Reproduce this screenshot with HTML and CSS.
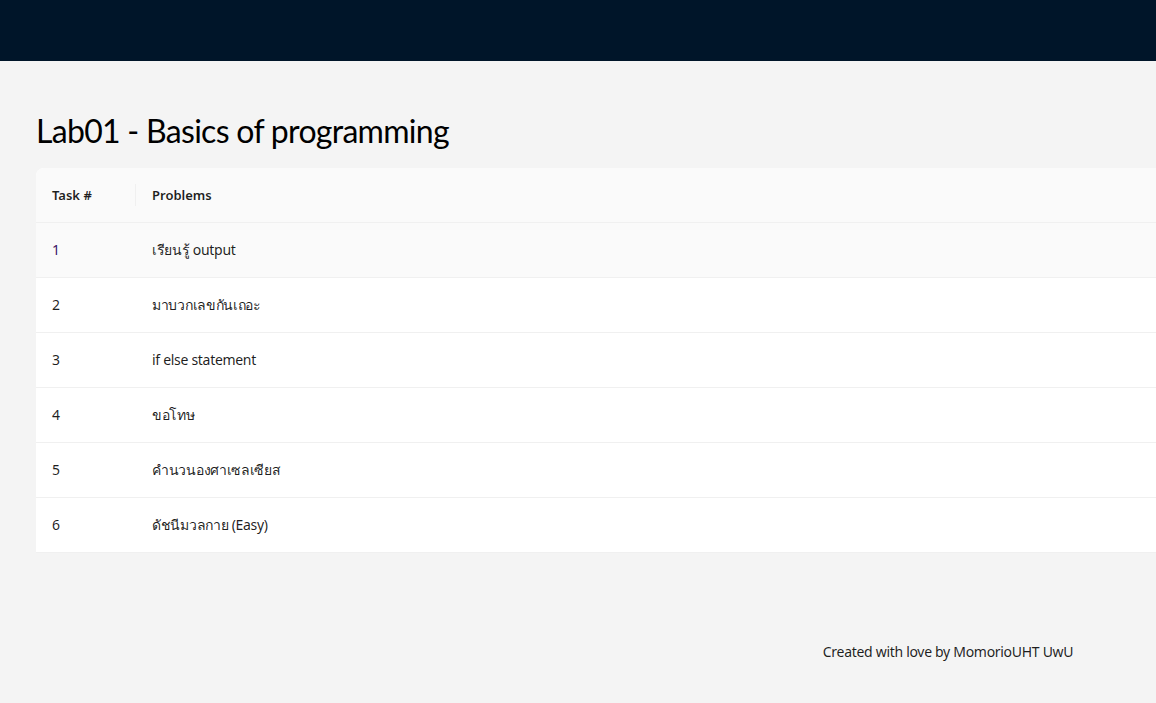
FILE: index.html
```html
<!DOCTYPE html>
<html lang="th">
<head>
<meta charset="utf-8">
<title>Lab01 - Basics of programming</title>
<link rel="stylesheet" href="styles.css">
</head>
<body>
<div class="layout">
  <header class="topbar"></header>
  <main class="content">
    <h2 class="page-title">Lab01 - Basics of programming</h2>
    <div class="table">
      <div class="row head">
        <div class="cell num">Task #</div>
        <div class="cell">Problems</div>
      </div>
      <div class="row hover">
        <div class="cell num link">1</div>
        <div class="cell">เรียนรู้ output</div>
      </div>
      <div class="row">
        <div class="cell num">2</div>
        <div class="cell">มาบวกเลขกันเถอะ</div>
      </div>
      <div class="row">
        <div class="cell num">3</div>
        <div class="cell">if else statement</div>
      </div>
      <div class="row">
        <div class="cell num">4</div>
        <div class="cell">ขอโทษ</div>
      </div>
      <div class="row">
        <div class="cell num">5</div>
        <div class="cell">คำนวนองศาเซลเซียส</div>
      </div>
      <div class="row">
        <div class="cell num">6</div>
        <div class="cell">ดัชนีมวลกาย (Easy)</div>
      </div>
    </div>
  </main>
  <footer class="footer">Created with love by MomorioUHT UwU</footer>
</div>
</body>
</html>
```

FILE: styles.css
```css
html, body {
  margin: 0;
  padding: 0;
  overflow: hidden;
  background: #f4f4f4;
}
body {
  font-family: "Noto Sans", "Open Sans", sans-serif;
  font-size: 14px;
  letter-spacing: -0.3px;
  color: rgba(0, 0, 0, 0.88);
}
.layout {
  width: 1896px;
  min-height: 703px;
  display: flex;
  flex-direction: column;
  background: #f4f4f4;
}
.topbar {
  height: 61px;
  background: #001529;
}
.content {
  padding: 0 36px;
}
.page-title {
  margin: 44px 0 0;
  height: 63px;
  font-family: Lato, "Noto Sans", sans-serif;
  font-size: 32px;
  font-weight: 400;
  letter-spacing: -0.7px;
  line-height: 52px;
  color: #000;
}
.table {
  background: #fff;
  border-radius: 8px 8px 0 0;
  overflow: hidden;
}
.row {
  display: flex;
  border-bottom: 1px solid #f0f0f0;
}
.row.head {
  background: #fafafa;
  font-weight: 600;
  font-size: 13px;
  letter-spacing: 0;
}
.row.hover {
  background: #fafafa;
}
.cell {
  padding: 16px;
  line-height: 22px;
  flex: 1;
  position: relative;
}
.cell.num {
  flex: 0 0 100px;
  box-sizing: border-box;
}
.head .cell.num::before {
  content: "";
  position: absolute;
  right: 0;
  top: 50%;
  width: 1px;
  height: 22px;
  transform: translateY(-50%);
  background: #f0f0f0;
}
.link {
  color: #3d1566;
}
.footer {
  margin-top: 88px;
  text-align: center;
  line-height: 22px;
}
```
